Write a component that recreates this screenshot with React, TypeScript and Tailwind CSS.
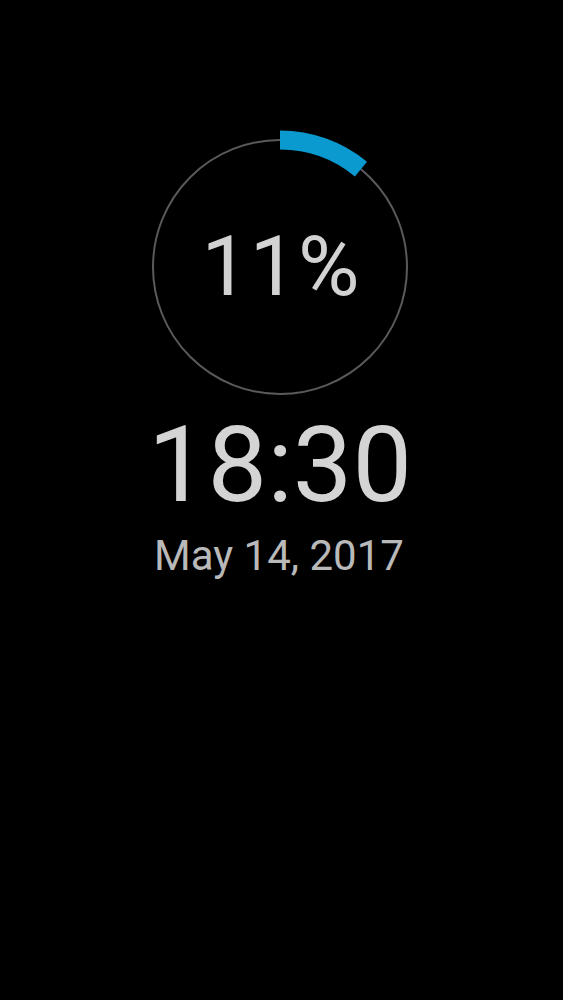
import React from 'react';

const percent = 11;

function Ring({ value }: { value: number }) {
  const cx = 140;
  const cy = 140;
  const r = 127;
  const angle = (value / 100) * Math.PI * 2;
  const x = cx + r * Math.sin(angle);
  const y = cy - r * Math.cos(angle);
  return (
    <svg width="280" height="280" viewBox="0 0 280 280" className="block">
      <circle cx={cx} cy={cy} r={r} fill="none" stroke="#5a5a5a" strokeWidth="2" />
      <path
        d={`M ${cx} ${cy - r} A ${r} ${r} 0 0 1 ${x} ${y}`}
        fill="none"
        stroke="#0a9ad0"
        strokeWidth="19"
      />
    </svg>
  );
}

export default function App() {
  return (
    <div
      className="w-full h-[1000px] bg-black flex flex-col items-center pt-[127px]"
      style={{ fontFamily: 'Roboto, "Noto Sans", sans-serif' }}
    >
      <div className="relative w-[280px] h-[280px] -ml-[3px]">
        <Ring value={percent} />
        <div className="absolute inset-0 flex items-center justify-center">
          <span className="text-[84px] leading-none text-[#d2d2d2] tracking-[1px] ml-[2px] mt-[0px]">{percent}%</span>
        </div>
      </div>
      <div className="text-[106px] leading-none text-[#d4d4d4] mt-[5px] -ml-[3px]">18:30</div>
      <div className="text-[42px] leading-none text-[#b9b9b9] mt-[17px] -ml-[5px]">May 14, 2017</div>
    </div>
  );
}
